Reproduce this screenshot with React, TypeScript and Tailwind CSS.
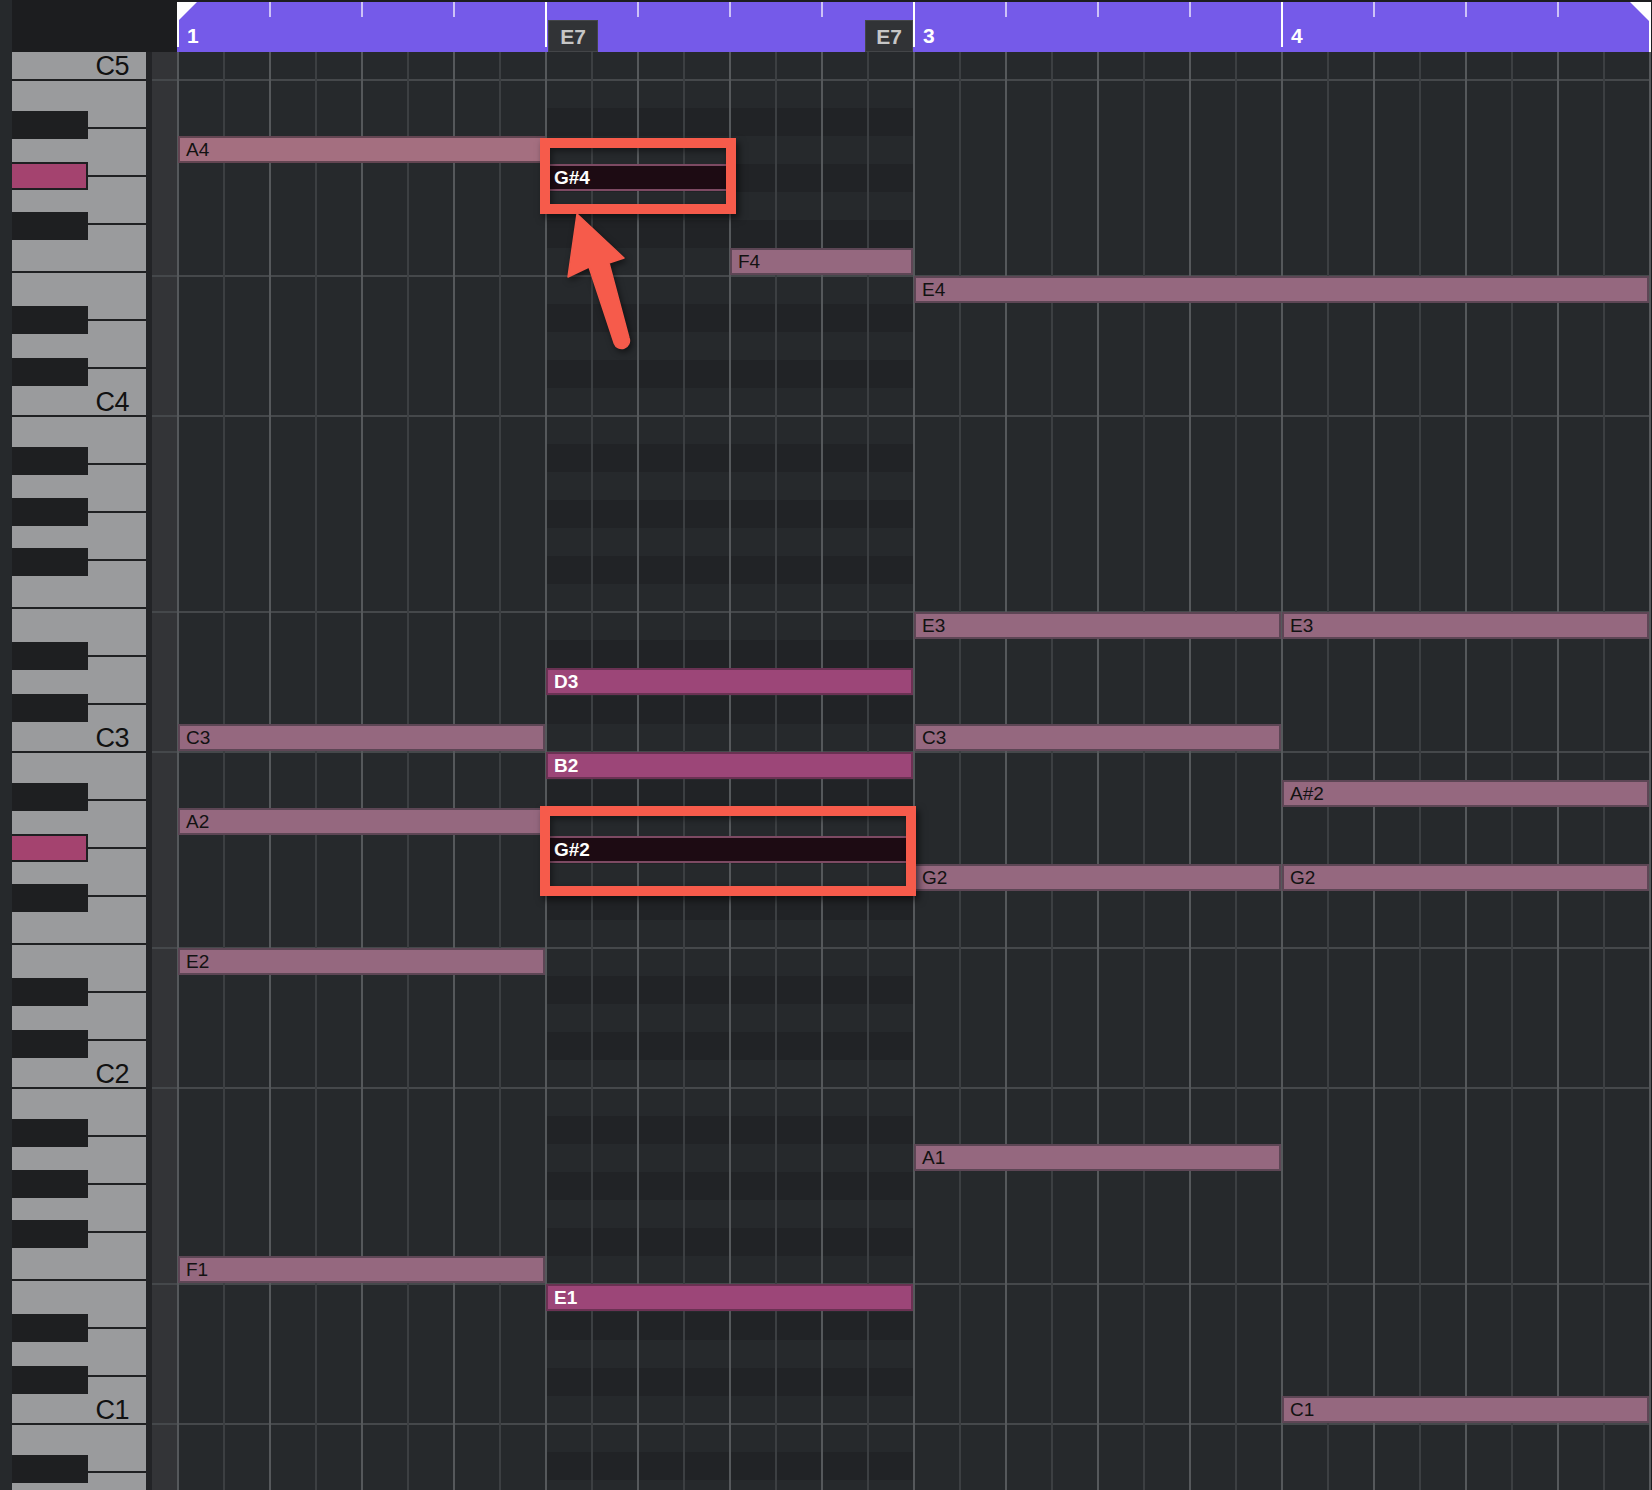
import React from "react";

const SEMI: Record<string, number> = {
  C: 0, "C#": 1, D: 2, "D#": 3, E: 4, F: 5, "F#": 6, G: 7, "G#": 8, A: 9, "A#": 10, B: 11,
};

function rowIndex(name: string): number {
  const m = name.match(/^([A-G]#?)(\d)$/);
  if (!m) return 0;
  const midi = (parseInt(m[2], 10) + 1) * 12 + SEMI[m[1]];
  return 72 - midi;
}

type Kind = "pink" | "rose" | "mag" | "sel";

const NOTES: { n: string; s: number; l: number; k: Kind }[] = [
  { n: "A4", s: 0, l: 8, k: "rose" },
  { n: "C3", s: 0, l: 8, k: "pink" },
  { n: "A2", s: 0, l: 8, k: "pink" },
  { n: "E2", s: 0, l: 8, k: "pink" },
  { n: "F1", s: 0, l: 8, k: "pink" },
  { n: "G#4", s: 8, l: 4, k: "sel" },
  { n: "F4", s: 12, l: 4, k: "pink" },
  { n: "D3", s: 8, l: 8, k: "mag" },
  { n: "B2", s: 8, l: 8, k: "mag" },
  { n: "G#2", s: 8, l: 8, k: "sel" },
  { n: "E1", s: 8, l: 8, k: "mag" },
  { n: "E4", s: 16, l: 16, k: "pink" },
  { n: "E3", s: 16, l: 8, k: "pink" },
  { n: "C3", s: 16, l: 8, k: "pink" },
  { n: "G2", s: 16, l: 8, k: "pink" },
  { n: "A1", s: 16, l: 8, k: "pink" },
  { n: "E3", s: 24, l: 8, k: "pink" },
  { n: "A#2", s: 24, l: 8, k: "pink" },
  { n: "G2", s: 24, l: 8, k: "pink" },
  { n: "C1", s: 24, l: 8, k: "pink" },
];

const KIND_CLASS: Record<Kind, string> = {
  pink: "bg-[#95687f] border-[#5d4655] text-[#121212]",
  rose: "bg-[#a46f80] border-[#634552] text-[#121212]",
  mag: "bg-[#9c4678] border-[#6a3253] text-white font-semibold",
  sel: "bg-[#1d0b13] border-[#7d4a63] text-white font-semibold",
};

const WHITE_KEYS: string[] = (() => {
  const out = ["C5"];
  for (let o = 4; o >= 0; o--) {
    for (const l of ["B", "A", "G", "F", "E", "D", "C"]) out.push(l + o);
  }
  return out;
})();

const LABELED = ["C5", "C4", "C3", "C2", "C1"];

const BLACK_OFFSETS: { name: string; off: number }[] = [
  { name: "A#", off: 31 },
  { name: "G#", off: 82 },
  { name: "F#", off: 132 },
  { name: "D#", off: 226 },
  { name: "C#", off: 278 },
];

const OCTAVE_TOPS = [-256, 80, 416, 752, 1088, 1424];

const BLACK_KEYS = OCTAVE_TOPS.flatMap((y0) =>
  BLACK_OFFSETS.map((b) => ({
    top: y0 + b.off - 52,
    hi: b.name === "G#" && (y0 === 80 || y0 === 752),
  }))
);

const ROWS = Array.from({ length: 52 }, (_, i) => {
  const pc = (((72 - i) % 12) + 12) % 12;
  return { i, black: [1, 3, 6, 8, 10].includes(pc) };
});

function Piano() {
  return (
    <div className="relative w-[134px] h-full overflow-hidden bg-[#9a9b9d]">
      <div className="flex flex-col mt-[-19px]">
        {WHITE_KEYS.map((k) => (
          <div
            key={k}
            className="h-[48px] shrink-0 border-b-2 border-[#1f2022] flex items-end justify-end pr-[17px] pb-[1px]"
          >
            {LABELED.includes(k) && (
              <span className="text-[27px] leading-[24px] text-[#111111] tracking-[-0.5px]">{k}</span>
            )}
          </div>
        ))}
      </div>
      {BLACK_KEYS.map((b, i) =>
        b.hi ? (
          <div
            key={i}
            className="absolute left-0 w-[76px] h-[28px] bg-[#1e1f21] pt-[2px] pb-[2px] pr-[2px]"
            style={{ top: b.top }}
          >
            <div className="w-full h-full bg-[#a4436f]" />
          </div>
        ) : (
          <div
            key={i}
            className="absolute left-0 w-[76px] h-[28px] bg-[#1e1f21]"
            style={{ top: b.top }}
          />
        )
      )}
    </div>
  );
}

function RulerBar({ num }: { num: number | null }) {
  return (
    <div className="flex w-[368px] h-full">
      <div className="w-[2px] h-[45px] bg-white" />
      <div className="w-[90px] pl-[8px] pt-[23px]">
        {num !== null && (
          <span className="text-[21px] leading-[21px] font-bold text-white">{num}</span>
        )}
      </div>
      <div className="w-[2px] h-[15px] bg-[#cdc2f7]" />
      <div className="w-[90px]" />
      <div className="w-[2px] h-[15px] bg-[#cdc2f7]" />
      <div className="w-[90px]" />
      <div className="w-[2px] h-[15px] bg-[#cdc2f7]" />
      <div className="w-[90px]" />
    </div>
  );
}

function Ruler() {
  return (
    <div className="w-[1474px] h-full pt-[2px] bg-[#1c1d1f]">
      <div className="relative flex h-[50px] bg-[#755ae9]">
        <RulerBar num={1} />
        <RulerBar num={null} />
        <RulerBar num={3} />
        <RulerBar num={4} />
        <div className="w-[2px] h-[50px] bg-white" />
        <svg className="absolute left-[1px] top-0" width="19" height="19" viewBox="0 0 19 19">
          <polygon points="0,0 19,0 0,19" fill="#ffffff" />
        </svg>
        <svg className="absolute right-[2px] top-0" width="19" height="19" viewBox="0 0 19 19">
          <polygon points="0,0 19,0 19,19" fill="#ffffff" />
        </svg>
        <div className="absolute left-[371px] top-[18px] w-[50px] h-[32px] bg-[#313336] border border-[#434548] flex items-center justify-center">
          <span className="text-[21px] font-bold text-[#c6c6c6] leading-none">E7</span>
        </div>
        <div className="absolute left-[688px] top-[18px] w-[48px] h-[32px] bg-[#313336] border border-[#434548] flex items-center justify-center">
          <span className="text-[21px] font-bold text-[#c6c6c6] leading-none">E7</span>
        </div>
      </div>
    </div>
  );
}

function Grid() {
  return (
    <div className="relative w-[1474px] h-full overflow-hidden bg-[#26292c]">
      <div className="flex flex-col">
        {ROWS.map((r) => (
          <div key={r.i} className="h-[28px] shrink-0 flex">
            <div className="w-[369px]" />
            {r.black && <div className="w-[367px] bg-[#212326]" />}
          </div>
        ))}
      </div>
      <div className="absolute inset-0 pointer-events-none [background-image:repeating-linear-gradient(to_right,#55585b_0px,#55585b_2px,transparent_2px,transparent_46px,#3c3f42_46px,#3c3f42_48px,transparent_48px,transparent_92px),repeating-linear-gradient(to_bottom,transparent_0px,transparent_27px,#45484b_27px,#45484b_29px,transparent_29px,transparent_223px,#45484b_223px,#45484b_225px,transparent_225px,transparent_336px)]" />
      {NOTES.map((n, i) => (
        <div
          key={i}
          className={`absolute h-[27px] border-2 flex items-center pl-[6px] text-[19px] leading-none ${KIND_CLASS[n.k]}`}
          style={{ left: n.s * 46 + 1, top: rowIndex(n.n) * 28, width: n.l * 46 - 1 }}
        >
          {n.n}
        </div>
      ))}
    </div>
  );
}

export default function App() {
  return (
    <div className="relative w-[1652px] h-[1490px] overflow-hidden bg-[#1c1d1f] font-['Liberation_Sans',Arial,sans-serif]">
      <div className="flex h-[52px]">
        <div className="w-[12px] bg-[#26292c]" />
        <div className="w-[165px] bg-[#1c1d1f]" />
        <Ruler />
        <div className="w-[1px] bg-[#1c1d1f]" />
      </div>
      <div className="flex h-[1438px]">
        <div className="w-[12px] bg-[#26292c]" />
        <Piano />
        <div className="w-[6px] bg-[#232427]" />
        <div className="w-[25px] h-full bg-[#333437] [background-image:repeating-linear-gradient(to_bottom,transparent_0px,transparent_27px,#45484b_27px,#45484b_29px,transparent_29px,transparent_223px,#45484b_223px,#45484b_225px,transparent_225px,transparent_336px)]" />
        <Grid />
        <div className="w-[1px] bg-[#1c1d1f]" />
      </div>

      {/* annotations */}
      <div className="absolute left-[540px] top-[138px] w-[196px] h-[76px] border-[10px] border-[#f65b4b] shadow-[3px_4px_7px_rgba(0,0,0,0.55),inset_2px_3px_6px_rgba(0,0,0,0.45)]" />
      <div className="absolute left-[540px] top-[806px] w-[376px] h-[90px] border-[10px] border-[#f65b4b] shadow-[3px_4px_7px_rgba(0,0,0,0.55),inset_2px_3px_6px_rgba(0,0,0,0.45)]" />
      <svg
        className="absolute left-0 top-0 pointer-events-none drop-shadow-[2px_3px_3px_rgba(0,0,0,0.5)]"
        width="1652"
        height="1490"
        viewBox="0 0 1652 1490"
      >
        <path
          d="M577 214 L624 258 L609 263 L629 338 A7.6 7.6 0 0 1 614.3 343.4 L589 267 L568 277 Z"
          fill="#f65b4b"
          stroke="#f65b4b"
          strokeWidth="1.5"
          strokeLinejoin="round"
        />
      </svg>
    </div>
  );
}
